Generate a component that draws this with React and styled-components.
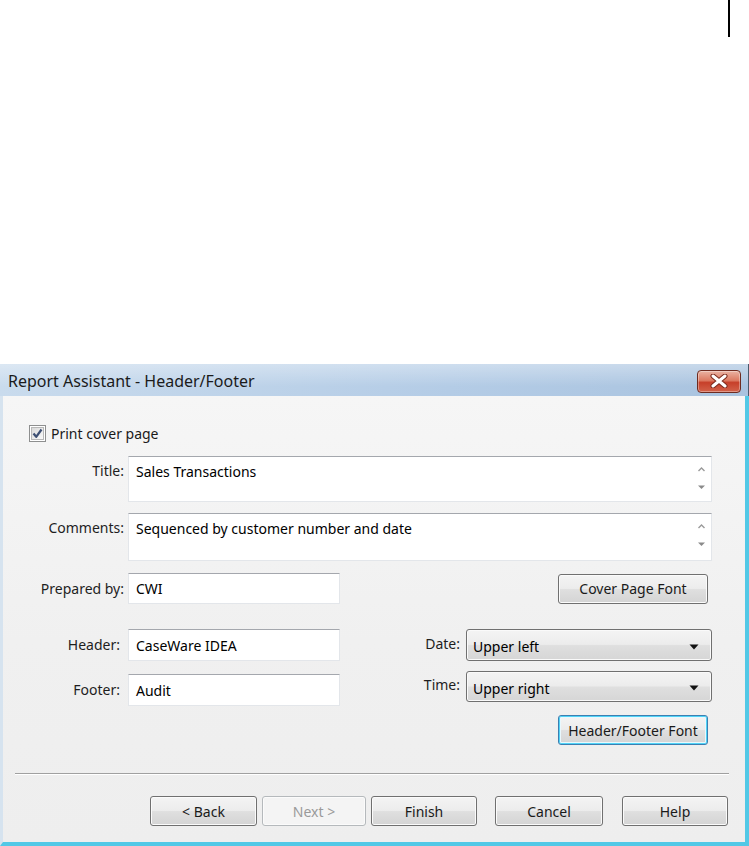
import React from 'react';
import styled, { createGlobalStyle } from 'styled-components';

const GlobalStyle = createGlobalStyle`
  html, body {
    margin: 0;
    padding: 0;
    background: #ffffff;
  }
  body {
    font-family: 'Noto Sans', 'Open Sans', sans-serif;
  }
`;

export default function App() {
  return (
    <Page>
      <GlobalStyle />
      <TopArea>
        <Mark />
      </TopArea>
      <Window>
        <TitleBar>
          <TitleText>Report Assistant - Header/Footer</TitleText>
          <CloseButton aria-label="Close">
            <svg width="18" height="14" viewBox="0 0 18 14">
              <path d="M3 2 L15 12 M15 2 L3 12" stroke="#7a2a1c" strokeWidth="5" strokeLinecap="round" />
              <path d="M3 2 L15 12 M15 2 L3 12" stroke="#ffffff" strokeWidth="3" strokeLinecap="round" />
            </svg>
          </CloseButton>
        </TitleBar>
        <Body>
          <CheckRow>
            <CheckBox>
              <svg width="17" height="17" viewBox="0 0 17 17">
                <defs>
                  <linearGradient id="cbg" x1="0" y1="0" x2="1" y2="1">
                    <stop offset="0" stopColor="#d8d8d8" />
                    <stop offset="1" stopColor="#fbfbfb" />
                  </linearGradient>
                </defs>
                <rect x="0.5" y="0.5" width="16" height="16" fill="#ffffff" stroke="#8e8f8f" />
                <rect x="2.5" y="2.5" width="12" height="12" fill="url(#cbg)" stroke="#b8b8b8" />
                <path d="M4.5 8.5 L7.2 11.8 L12.5 4.5" fill="none" stroke="#3d4f73" strokeWidth="2.2" strokeLinejoin="round" />
              </svg>
            </CheckBox>
            <CheckLabel>Print cover page</CheckLabel>
          </CheckRow>

          <FieldRow $top={14}>
            <Label $top>Title:</Label>
            <TextArea>
              <span>Sales Transactions</span>
              <ScrollArrows />
            </TextArea>
          </FieldRow>

          <FieldRow $top={11}>
            <Label $top>Comments:</Label>
            <TextArea $h={48}>
              <span>Sequenced by customer number and date</span>
              <ScrollArrows />
            </TextArea>
          </FieldRow>

          <FieldRow $top={12}>
            <Label>Prepared by:</Label>
            <InlineRow>
              <TextBox $h={31}>CWI</TextBox>
              <PushButton $w={150}>Cover Page Font</PushButton>
            </InlineRow>
          </FieldRow>

          <HeaderGrid>
            <Column $gap={13}>
              <FieldRow>
                <Label $inset>Header:</Label>
                <TextBox>CaseWare IDEA</TextBox>
              </FieldRow>
              <FieldRow>
                <Label $inset>Footer:</Label>
                <TextBox>Audit</TextBox>
              </FieldRow>
            </Column>
            <Column $gap={10}>
              <SelectRow>
                <SideLabel>Date:</SideLabel>
                <Combo $h={32}>
                  <span>Upper left</span>
                  <ComboArrow />
                </Combo>
              </SelectRow>
              <SelectRow>
                <SideLabel>Time:</SideLabel>
                <Combo $h={31}>
                  <span>Upper right</span>
                  <ComboArrow />
                </Combo>
              </SelectRow>
              <FontRow>
                <PushButton $w={150} $focus>Header/Footer Font</PushButton>
              </FontRow>
            </Column>
          </HeaderGrid>

          <Separator />

          <ButtonBar>
            <PushButton $w={107}>&lt; Back</PushButton>
            <PushButton $w={104} disabled>Next &gt;</PushButton>
            <PushButton $w={106}>Finish</PushButton>
            <Spacer />
            <PushButton $w={108}>Cancel</PushButton>
            <Spacer $w={19} />
            <PushButton $w={106}>Help</PushButton>
          </ButtonBar>
        </Body>
      </Window>
    </Page>
  );
}

function ScrollArrows() {
  return (
    <Arrows>
      <svg width="9" height="6" viewBox="0 0 9 6">
        <path d="M1.5 5 L4.5 2 L7.5 5" fill="none" stroke="#9a9a9a" strokeWidth="1.4" />
      </svg>
      <svg width="9" height="6" viewBox="0 0 9 6">
        <path d="M1 1.5 H8 L4.5 5 Z" fill="#8a8a8a" />
      </svg>
    </Arrows>
  );
}

function ComboArrow() {
  return (
    <svg width="10" height="6" viewBox="0 0 10 6">
      <path d="M0.5 0.5 H9.5 L5 5.5 Z" fill="#111111" />
    </svg>
  );
}

const Page = styled.div`
  width: 749px;
  height: 846px;
  display: flex;
  flex-direction: column;
  overflow: hidden;
`;

const TopArea = styled.div`
  height: 364px;
  flex-shrink: 0;
`;

const Mark = styled.div`
  width: 2px;
  height: 37px;
  margin-left: 728px;
  background: #000000;
`;

const Window = styled.div`
  flex: 1;
  display: flex;
  flex-direction: column;
  background: linear-gradient(to right, #c9dbed, #b4cce6 60%, #a9c3df);
`;

const TitleBar = styled.div`
  height: 32px;
  flex-shrink: 0;
  display: flex;
  align-items: center;
  justify-content: space-between;
  padding: 0 7px 0 8px;
  background: linear-gradient(to bottom, rgba(255, 255, 255, 0.35), rgba(255, 255, 255, 0) 70%);
  border-right: 1px solid #4b5a6b;
`;

const TitleText = styled.span`
  font-size: 16px;
  color: #1b1b1b;
  padding-top: 1px;
`;

const CloseButton = styled.div`
  width: 42px;
  height: 21px;
  margin-top: 2px;
  border: 1px solid #6e2b20;
  border-radius: 4px;
  display: flex;
  align-items: center;
  justify-content: center;
  background: linear-gradient(to bottom, #eab3a3 0%, #dc7a62 45%, #c7402a 55%, #d2624a 100%);
  box-shadow: inset 0 0 0 1px rgba(255, 255, 255, 0.35);
`;

const Body = styled.div`
  flex: 1;
  display: flex;
  flex-direction: column;
  padding-top: 29px;
  background: linear-gradient(to bottom, #f6f6f6, #f0f0f0 55%, #eeeeee);
  border-left: 3px solid #d6e3ef;
  border-right: 4px solid #52c8e6;
  border-bottom: 4px solid #52c8e6;
`;

const CheckRow = styled.div`
  display: flex;
  align-items: center;
  height: 17px;
  margin-left: 26px;
  gap: 5px;
`;

const CheckBox = styled.div`
  width: 17px;
  height: 17px;
  display: flex;
`;

const CheckLabel = styled.span`
  font-size: 14px;
  color: #1a1a1a;
`;

const FieldRow = styled.div`
  display: grid;
  grid-template-columns: 121px 1fr;
  column-gap: 4px;
  align-items: ${p => (p.$align || 'center')};
  margin-top: ${p => p.$top || 0}px;
`;

const Label = styled.span`
  font-size: 14px;
  line-height: 20px;
  color: #1e1e1e;
  text-align: right;
  padding-right: ${p => (p.$inset ? 4 : 0)}px;
  align-self: ${p => (p.$top ? 'start' : 'center')};
  padding-top: ${p => (p.$top ? 5 : 0)}px;
`;

const TextArea = styled.div`
  width: 584px;
  height: ${p => p.$h || 46}px;
  box-sizing: border-box;
  display: flex;
  justify-content: space-between;
  align-items: flex-start;
  padding: 5px 4px 0 7px;
  background: #ffffff;
  border: 1px solid #e3e6ea;
  border-top-color: #a4a7ad;
  font-size: 14px;
  line-height: 20px;
  color: #000000;
`;

const Arrows = styled.div`
  display: flex;
  flex-direction: column;
  gap: 12px;
  padding-top: 4px;
  margin-right: 1px;
`;

const InlineRow = styled.div`
  display: flex;
  align-items: center;
  justify-content: space-between;
  width: 580px;
`;

const TextBox = styled.div`
  width: 212px;
  height: ${p => p.$h || 32}px;
  box-sizing: border-box;
  display: flex;
  align-items: center;
  padding-left: 7px;
  background: #ffffff;
  border: 1px solid #e3e6ea;
  border-top-color: #a4a7ad;
  font-size: 14px;
  color: #000000;
`;

const PushButton = styled.button`
  width: ${p => p.$w}px;
  height: 30px;
  box-sizing: border-box;
  padding: 0;
  font-family: 'Noto Sans', 'Open Sans', sans-serif;
  font-size: 14px;
  color: ${p => (p.disabled ? '#9a9a9a' : '#1a1a1a')};
  border-radius: 3px;
  border: 1px solid ${p => (p.disabled ? '#b5b9bc' : p.$focus ? '#3c7fb1' : '#707070')};
  background: ${p =>
    p.disabled
      ? '#f4f4f4'
      : 'linear-gradient(to bottom, #f4f4f4 0%, #ececec 48%, #dfdfdf 52%, #d4d4d4 100%)'};
  box-shadow: ${p =>
    p.$focus ? 'inset 0 0 0 1px #4fd3f7, inset 0 0 0 2px #e9f8fd' : 'inset 0 0 0 1px #fbfbfb'};
`;

const HeaderGrid = styled.div`
  display: grid;
  grid-template-columns: 340px 1fr;
  margin-top: 25px;
  align-items: start;
`;

const Column = styled.div`
  display: flex;
  flex-direction: column;
  gap: ${p => p.$gap}px;
`;

const SelectRow = styled.div`
  display: flex;
  align-items: center;
  justify-content: flex-end;
  gap: 6px;
  margin-right: 33px;
`;

const SideLabel = styled.span`
  font-size: 14px;
  color: #1e1e1e;
  padding-bottom: 4px;
`;

const Combo = styled.div`
  width: 246px;
  height: ${p => p.$h}px;
  box-sizing: border-box;
  display: flex;
  align-items: center;
  justify-content: space-between;
  padding: 3px 12px 0 6px;
  border: 1px solid #707070;
  border-radius: 3px;
  background: linear-gradient(to bottom, #f4f4f4 0%, #ececec 48%, #dfdfdf 52%, #d6d6d6 100%);
  box-shadow: inset 0 0 0 1px #fafafa;
  font-size: 14px;
  color: #000000;
`;

const FontRow = styled.div`
  display: flex;
  justify-content: flex-end;
  margin-top: 3px;
  margin-right: 37px;
`;

const Separator = styled.div`
  height: 1px;
  margin: 28px 16px 0 12px;
  background: #a0a0a0;
  border-bottom: 1px solid #ffffff;
`;

const ButtonBar = styled.div`
  display: flex;
  justify-content: flex-end;
  gap: 5px;
  margin-top: 21px;
  margin-right: 17px;
`;

const Spacer = styled.div`
  width: ${p => p.$w || 18}px;
  margin: 0 -5px;
`;
